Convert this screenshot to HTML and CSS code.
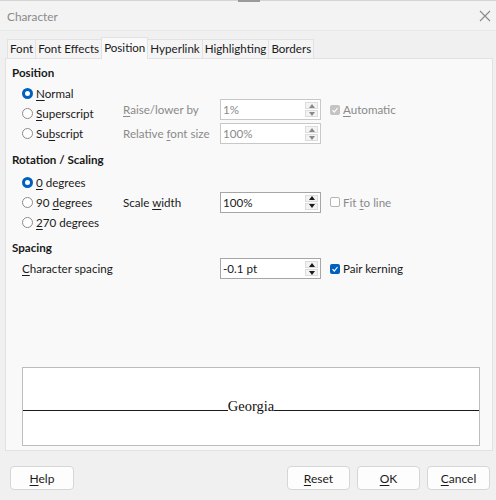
FILE: index.html
```html
<!DOCTYPE html>
<html>
<head>
<meta charset="utf-8">
<link rel="stylesheet" href="styles.css">
</head>
<body>
<div class="window">
  <div class="topline"><span class="topmark"></span></div>
  <div class="titlebar">
    <span class="title">Character</span>
    <svg class="close" width="12" height="12" viewBox="0 0 12 12"><path d="M1 1 L11 11 M11 1 L1 11" stroke="#8a8a8a" stroke-width="1.1" fill="none"/></svg>
  </div>
  <div class="tabs">
    <div class="tab">Font</div>
    <div class="tab">Font Effects</div>
    <div class="tab active">Position</div>
    <div class="tab">Hyperlink</div>
    <div class="tab">Highlighting</div>
    <div class="tab">Borders</div>
  </div>
  <div class="panel">
    <div class="heading h-pos">Position</div>
    <div class="pos-grid">
      <div class="radios">
        <div class="radio-row"><span class="radio on"></span><span><u>N</u>ormal</span></div>
        <div class="radio-row"><span class="radio"></span><span><u>S</u>uperscript</span></div>
        <div class="radio-row"><span class="radio"></span><span>Su<u>b</u>script</span></div>
      </div>
      <div class="fields">
        <div class="field-row">
          <span class="flabel dis"><u>R</u>aise/lower by</span>
          <div class="spin dis"><span class="val">1%</span><span class="arrows"><span class="up"></span><span class="down"></span></span></div>
          <span class="check-wrap dis"><span class="cbox gray-on"><svg width="8" height="8" viewBox="0 0 8 8"><path d="M1.5 4.2 L3.3 6 L6.5 2" stroke="#fff" stroke-width="1.2" fill="none"/></svg></span><span><u>A</u>utomatic</span></span>
        </div>
        <div class="field-row">
          <span class="flabel dis">Relative <u>f</u>ont size</span>
          <div class="spin dis"><span class="val">100%</span><span class="arrows"><span class="up"></span><span class="down"></span></span></div>
        </div>
      </div>
    </div>

    <div class="heading h-rot">Rotation / Scaling</div>
    <div class="rot-grid">
      <div class="radio-row"><span class="radio on"></span><span><u>0</u> degrees</span></div>
      <div class="radio-row mid">
        <span class="radio"></span><span class="rlabel">90 <u>d</u>egrees</span>
        <span class="flabel">Scale <u>w</u>idth</span>
        <div class="spin"><span class="val">100%</span><span class="arrows"><span class="up"></span><span class="down"></span></span></div>
        <span class="check-wrap dis"><span class="cbox empty"></span><span>Fit <u>t</u>o line</span></span>
      </div>
      <div class="radio-row"><span class="radio"></span><span><u>2</u>70 degrees</span></div>
    </div>

    <div class="heading h-spc">Spacing</div>
    <div class="spc-row">
      <span class="slabel"><u>C</u>haracter spacing</span>
      <div class="spin"><span class="val">-0.1 pt</span><span class="arrows"><span class="up"></span><span class="down"></span></span></div>
      <span class="check-wrap"><span class="cbox blue-on"><svg width="8" height="8" viewBox="0 0 8 8"><path d="M1.5 4.2 L3.3 6 L6.5 2" stroke="#fff" stroke-width="1.2" fill="none"/></svg></span><span>Pair kerning</span></span>
    </div>

    <div class="preview">
      <div class="pv-row">
        <div class="pv-line"></div>
        <span class="pv-text">Georgia</span>
        <div class="pv-line"></div>
      </div>
    </div>
  </div>
  <div class="buttons">
    <button class="btn"><u>H</u>elp</button>
    <span class="spacer"></span>
    <button class="btn"><u>R</u>eset</button>
    <button class="btn"><u>O</u>K</button>
    <button class="btn"><u>C</u>ancel</button>
  </div>
</div>
</body>
</html>
```
FILE: styles.css
```css
* { box-sizing: border-box; }
html, body { margin: 0; padding: 0; }
body {
  font-family: Lato, "Noto Sans", "Liberation Sans", sans-serif;
  font-size: 11.6px;
  color: #1a1a1a;
  background: #f0f0f0;
}
u { text-decoration: underline; text-underline-offset: 2px; text-decoration-thickness: 1px; }
.window {
  width: 496px;
  height: 500px;
  background: #f0f0f0;
  overflow: hidden;
}
.topline {
  height: 2px;
  border-top: 1px solid #d4d4d4;
  background: #f3f3f3;
  padding-left: 238px;
}
.topmark { display: block; width: 22px; height: 2px; margin-top: -1px; background: #9a9a9a; }
.titlebar {
  height: 29px;
  background: #f3f3f3;
  border-bottom: 1px solid #e8e8e8;
  display: flex;
  align-items: center;
  justify-content: space-between;
  padding: 0 5px 0 7px;
}
.title { color: #8a8a8a; font-size: 11.8px; }
.tabs {
  display: flex;
  align-items: flex-end;
  padding-left: 7px;
  margin-top: 6px;
  height: 21px;
}
.tab {
  height: 19px;
  line-height: 18px;
  padding: 0 2px;
  background: #f4f4f4;
  border: 1px solid #e2e2e2;
  border-bottom: none;
  margin-right: -1px;
  color: #1a1a1a;
}
.tab.active {
  line-height: 20px;
  background: #f9f9f9;
  position: relative;
  z-index: 1;
  margin-bottom: -1px;
  height: 22px;
}
.panel {
  margin: 0 3px 0 5px;
  height: 393px;
  background: #f9f9f9;
  border: 1px solid #e2e2e2;
  padding: 6px 0 0 6px;
}
.heading {
  font-weight: bold;
  height: 16px;
  line-height: 16px;
  color: #1a1a1a;
}
.h-pos { margin-bottom: 2px; }
.h-rot { margin-top: 8px; margin-bottom: 4px; }
.h-spc { margin-top: 8px; margin-bottom: 2px; }
.pos-grid { display: flex; padding-left: 10px; }
.radios { width: 101px; }
.radio-row {
  height: 20px;
  display: flex;
  align-items: center;
}
.radio {
  width: 11px;
  height: 11px;
  border-radius: 50%;
  border: 1px solid #8a8a8a;
  background: #fff;
  margin-right: 3px;
  flex: none;
}
.radio.on { border: 3px solid #0060c0; }
.fields { margin-top: 16px; }
.field-row {
  height: 21px;
  display: flex;
  align-items: center;
}
.field-row + .field-row { margin-top: 3px; }
.flabel { width: 97px; flex: none; }
.dis { color: #8a8a8a; }
.spin {
  width: 101px;
  height: 21px;
  border: 1px solid #a6a6a6;
  background: #fff;
  display: flex;
  align-items: center;
  justify-content: space-between;
  padding: 0 2px 0 2px;
  color: #1a1a1a;
  flex: none;
}
.spin.dis { border-color: #c8c8c8; color: #8a8a8a; }
.arrows { display: flex; flex-direction: column; gap: 1px; }
.arrows span {
  width: 13px;
  height: 7px;
  background: #f3f3f3;
  border: 1px solid #dcdcdc;
  display: flex;
  align-items: center;
  justify-content: center;
}
.arrows .up::before {
  content: "";
  border-left: 3px solid transparent;
  border-right: 3px solid transparent;
  border-bottom: 4px solid #1a1a1a;
}
.arrows .down::before {
  content: "";
  border-left: 3px solid transparent;
  border-right: 3px solid transparent;
  border-top: 4px solid #1a1a1a;
}
.spin.dis .arrows .up::before { border-bottom-color: #8a8a8a; }
.spin.dis .arrows .down::before { border-top-color: #8a8a8a; }
.check-wrap { display: flex; align-items: center; margin-left: 9px; }
.cbox {
  width: 10px;
  height: 10px;
  border-radius: 2px;
  margin-right: 3px;
  display: flex;
  align-items: center;
  justify-content: center;
  flex: none;
}
.cbox.gray-on { background: #c4c4c4; }
.cbox.blue-on { background: #0060c0; }
.cbox.empty { background: #fff; border: 1px solid #b4b4b4; }
.rot-grid { padding-left: 10px; }
.rlabel { width: 87px; flex: none; }
.spc-row {
  display: flex;
  align-items: center;
  height: 21px;
  padding-left: 10px;
}
.slabel { width: 198px; flex: none; }
.preview {
  margin: 88px 0 0 10px;
  width: 458px;
  height: 79px;
  background: #fff;
  border: 1px solid #bdbdbd;
  padding-top: 31px;
}
.pv-row { display: flex; align-items: flex-end; height: 14px; }
.pv-line { flex: 1; height: 1px; background: #1a1a1a; margin-bottom: 2px; }
.pv-text {
  font-family: "Liberation Serif", serif;
  font-size: 14.5px;
  color: #111;
  line-height: 14px;
}
.buttons {
  display: flex;
  padding: 0 6px 0 10px;
  margin-top: 15px;
  gap: 7px;
}
.spacer { flex: 1; }
.btn {
  width: 63px;
  height: 24px;
  background: #fdfdfd;
  border: 1px solid #d6d6d6;
  border-radius: 4px;
  font-family: Lato, "Noto Sans", "Liberation Sans", sans-serif;
  font-size: 12px;
  color: #1a1a1a;
  padding: 0;
}
.btn:first-child { width: 64px; }
```
